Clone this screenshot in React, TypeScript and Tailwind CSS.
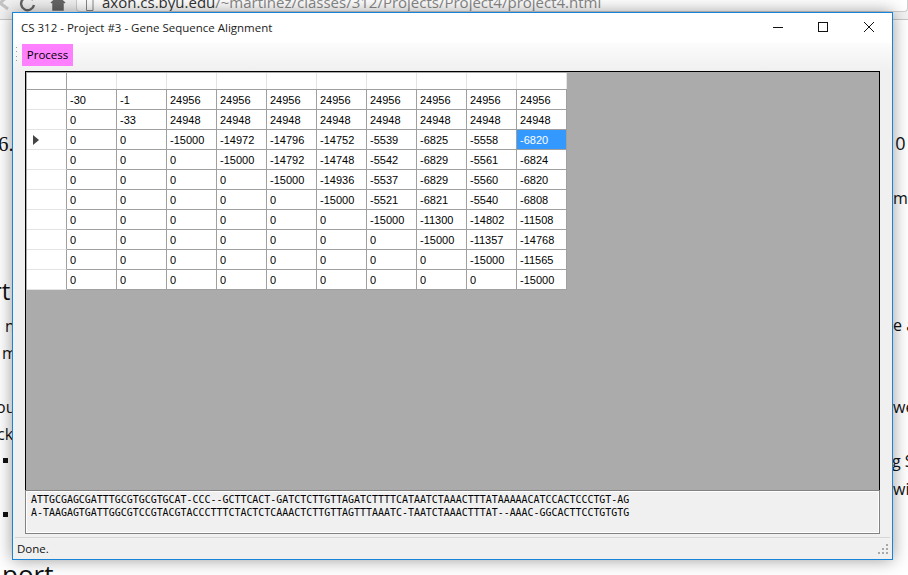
import React from 'react';

const rows: string[][] = [
  ['-30', '-1', '24956', '24956', '24956', '24956', '24956', '24956', '24956', '24956'],
  ['0', '-33', '24948', '24948', '24948', '24948', '24948', '24948', '24948', '24948'],
  ['0', '0', '-15000', '-14972', '-14796', '-14752', '-5539', '-6825', '-5558', '-6820'],
  ['0', '0', '0', '-15000', '-14792', '-14748', '-5542', '-6829', '-5561', '-6824'],
  ['0', '0', '0', '0', '-15000', '-14936', '-5537', '-6829', '-5560', '-6820'],
  ['0', '0', '0', '0', '0', '-15000', '-5521', '-6821', '-5540', '-6808'],
  ['0', '0', '0', '0', '0', '0', '-15000', '-11300', '-14802', '-11508'],
  ['0', '0', '0', '0', '0', '0', '0', '-15000', '-11357', '-14768'],
  ['0', '0', '0', '0', '0', '0', '0', '0', '-15000', '-11565'],
  ['0', '0', '0', '0', '0', '0', '0', '0', '0', '-15000'],
];

const seqA = 'ATTGCGAGCGATTTGCGTGCGTGCAT-CCC--GCTTCACT-GATCTCTTGTTAGATCTTTTCATAATCTAAACTTTATAAAAACATCCACTCCCTGT-AG';
const seqB = 'A-TAAGAGTGATTGGCGTCCGTACGTACCCTTTCTACTCTCAAACTCTTGTTAGTTTAAATC-TAATCTAAACTTTAT--AAAC-GGCACTTCCTGTGTG';

function BrowserBar() {
  return (
    <div className="flex h-[20px] items-start border-b border-[#c8c8c8] bg-[#f2f2f2] overflow-hidden">
      <svg width="72" height="12" viewBox="0 0 72 12" className="shrink-0">
        <path d="M0 3 L7 -3 M0 3 L8 9" stroke="#c4c4c4" strokeWidth="3" fill="none" />
        <path d="M33 0 A6.5 6.5 0 1 0 34 5" stroke="#666" strokeWidth="2.4" fill="none" />
        <path d="M51 3 L58 -3 L65 3 M53 3 V10 H63 V3" fill="#666" stroke="#666" strokeWidth="1.5" />
      </svg>
      <div className="ml-[4px] flex h-[12px] grow items-start rounded-b-sm border-x border-b border-[#cfcfcf] bg-white overflow-hidden">
        <svg width="12" height="12" viewBox="0 0 12 12" className="ml-[8px] shrink-0">
          <path d="M1.5 -3 H8 V10.5 H1.5 Z" fill="#fff" stroke="#888" />
        </svg>
        <span className="ml-[5px] mt-[-8px] whitespace-nowrap font-['Open_Sans',sans-serif] text-[15px] leading-[20px] text-[#333]">
          axon.cs.byu.edu<span className="text-[#888]">/~martinez/classes/312/Projects/Project4/project4.html</span>
        </span>
      </div>
    </div>
  );
}

// page behind the window, only the edges show
function PageBehind() {
  return (
    <div className="whitespace-nowrap font-['Open_Sans',sans-serif] text-[16px] leading-[20px] text-[#111]">
      <span className="absolute left-[-2px] top-[132px] font-['Liberation_Serif',serif] text-[21px] leading-[24px]">6.</span>
      <span className="absolute left-[885px] top-[133px] text-[18px]">10</span>
      <span className="absolute left-[893px] top-[188px]">me</span>
      <span className="absolute left-[-8px] top-[276px] text-[24px] leading-[30px]">rt</span>
      <span className="absolute left-[5px] top-[316px]">n</span>
      <span className="absolute left-[2px] top-[343px]">m</span>
      <span className="absolute left-[893px] top-[315px]">e a</span>
      <span className="absolute left-[-4px] top-[397px]">ou</span>
      <span className="absolute left-[-3px] top-[424px]">ck</span>
      <span className="absolute left-[893px] top-[397px]">we</span>
      <div className="absolute left-[3px] top-[458px] h-[5px] w-[5px] bg-[#111]" />
      <div className="absolute left-[3px] top-[512px] h-[5px] w-[5px] bg-[#111]" />
      <span className="absolute left-[892px] top-[451px]">g S</span>
      <span className="absolute left-[893px] top-[479px]">wi</span>
      <span className="absolute left-[2px] top-[559px] text-[26px] leading-[30px]">port</span>
    </div>
  );
}

function DataGrid() {
  return (
    <div className="font-['Liberation_Sans',sans-serif] text-[11px] leading-[20px] text-black">
      <div className="flex h-[17px] w-[540px] border-b border-[#a0a0a0] bg-white">
        <div className="w-[40px] border-r border-[#a0a0a0]" />
        {rows[0].map((_, i) => (
          <div key={i} className="w-[50px] border-r border-[#e4e4e4]" />
        ))}
      </div>
      {rows.map((row, r) => (
        <div key={r} className="flex h-[20px] w-[540px] bg-white">
          <div className="flex w-[40px] items-center border-r border-b border-r-[#a0a0a0] border-b-[#e4e4e4] pl-[6px]">
            {r === 2 && (
              <svg width="6" height="10" viewBox="0 0 6 10">
                <path d="M0 0 L6 5 L0 10 Z" fill="#444" />
              </svg>
            )}
          </div>
          {row.map((v, c) => {
            const selected = r === 2 && c === 9;
            return (
              <div
                key={c}
                className={
                  selected
                    ? 'w-[50px] border-r border-b border-[#a0a0a0] bg-[#3399ff] pl-[3px] text-white'
                    : 'w-[50px] border-r border-b border-[#a0a0a0] pl-[3px]'
                }
              >
                {v}
              </div>
            );
          })}
        </div>
      ))}
    </div>
  );
}

export default function App() {
  return (
    <div className="relative h-[575px] w-[908px] overflow-hidden bg-white">
      <BrowserBar />
      <PageBehind />

      <div className="absolute left-[12px] top-[12px] flex h-[548px] w-[881px] flex-col border border-[#1883d7] bg-[#f0f0f0] shadow-[0_0_16px_rgba(0,0,0,0.4)]">
        <div className="flex h-[30px] shrink-0 items-center bg-white pl-[8px] font-['Open_Sans',sans-serif] text-[11.5px] text-[#222]">
          <span>CS 312 - Project #3 - Gene Sequence Alignment</span>
          <svg width="120" height="30" viewBox="0 0 120 30" className="ml-auto mr-[5px]">
            <path d="M6 14.5 H16" stroke="#111" strokeWidth="1" />
            <rect x="51.5" y="9.5" width="9" height="9" fill="none" stroke="#111" />
            <path d="M97 9 L107 19 M107 9 L97 19" stroke="#111" strokeWidth="1" />
          </svg>
        </div>

        <div className="flex h-[28px] shrink-0 items-start bg-gradient-to-b from-[#fcfcfc] to-[#f0f0f0] pl-[3px]">
          <div className="mt-[4px] flex h-[14px] w-[2px] flex-col justify-between">
            <div className="h-[1px] w-[1px] bg-[#999]" />
            <div className="h-[1px] w-[1px] bg-[#999]" />
            <div className="h-[1px] w-[1px] bg-[#999]" />
            <div className="h-[1px] w-[1px] bg-[#999]" />
          </div>
          <div className="ml-[4px] mt-[1px] flex h-[22px] w-[51px] items-center justify-center bg-[#ff80ff] font-['Open_Sans',sans-serif] text-[11.5px] text-black">
            Process
          </div>
        </div>

        <div className="mx-[12px] flex h-[419px] shrink-0 flex-col border-x border-t border-black bg-[#ababab] pl-[1px] pt-[1px]">
          <DataGrid />
        </div>

        <div className="mx-[12px] h-[44px] shrink-0 border-x border-y border-[#828282] bg-[#f0f0f0] pl-[5px] pt-[2px] font-['DejaVu_Sans_Mono',monospace] text-[9.95px] leading-[13px] text-black shadow-[inset_0_0_0_1px_#fff]">
          <div className="whitespace-nowrap">{seqA}</div>
          <div className="whitespace-nowrap">{seqB}</div>
        </div>

        <div className="mx-[2px] mt-[3px] flex grow items-center border-t border-[#d7d7d7] pl-[2px] font-['Open_Sans',sans-serif] text-[11.5px] text-[#111]">
          <span>Done.</span>
          <svg width="12" height="12" viewBox="0 0 12 12" className="ml-auto" fill="#a8a8a8">
            <rect x="8" y="1" width="2" height="2" />
            <rect x="4" y="5" width="2" height="2" />
            <rect x="8" y="5" width="2" height="2" />
            <rect x="0" y="9" width="2" height="2" />
            <rect x="4" y="9" width="2" height="2" />
            <rect x="8" y="9" width="2" height="2" />
          </svg>
        </div>
      </div>
    </div>
  );
}
